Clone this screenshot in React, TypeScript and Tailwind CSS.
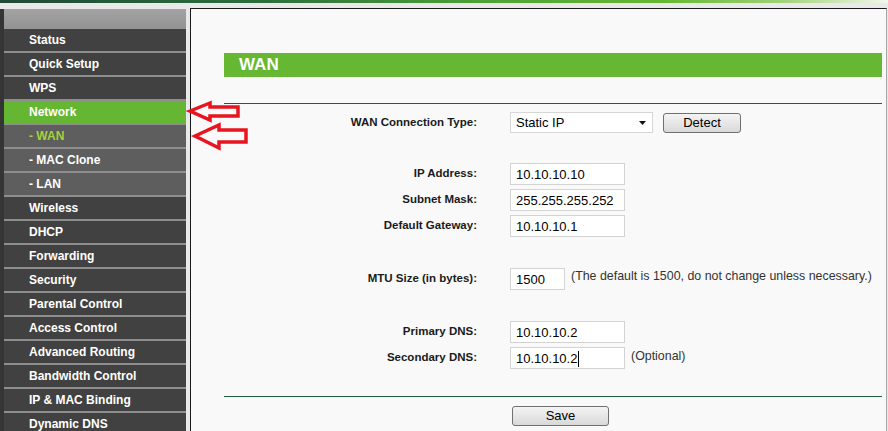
const menu = [
  { label: 'Status' },
  { label: 'Quick Setup' },
  { label: 'WPS' },
  { label: 'Network', active: true },
  { label: '- WAN', sub: true, current: true },
  { label: '- MAC Clone', sub: true },
  { label: '- LAN', sub: true },
  { label: 'Wireless' },
  { label: 'DHCP' },
  { label: 'Forwarding' },
  { label: 'Security' },
  { label: 'Parental Control' },
  { label: 'Access Control' },
  { label: 'Advanced Routing' },
  { label: 'Bandwidth Control' },
  { label: 'IP & MAC Binding' },
  { label: 'Dynamic DNS' },
];

function Sidebar() {
  return (
    <aside className="mt-[6px] w-[182px] shrink-0 bg-[#8f8f8f]">
      <div className="h-[20px] bg-gradient-to-b from-[#a3a3a3] to-[#939393]" />
      {menu.map((m) => (
        <div
          key={m.label}
          className={
            'flex h-[24px] items-center border-b-2 border-[#8e8e8e] pl-[25px] text-[12px] font-bold ' +
            (m.active ? 'bg-[#65b633] ' : m.sub ? 'bg-[#5e5e5e] ' : 'bg-[#414141] ') +
            (m.current ? 'text-[#a6d23c]' : 'text-white')
          }
        >
          {m.label}
        </div>
      ))}
    </aside>
  );
}

function Label({ children }: { children: React.ReactNode }) {
  return <div className="w-[253px] shrink-0 text-right text-[11.5px] font-bold text-[#1b1b1b]">{children}</div>;
}

function Field({ value, width, caret }: { value: string; width: string; caret?: boolean }) {
  return (
    <div className={'ml-[33px] flex h-[22px] items-center border border-[#d3d3d3] bg-white pl-[5px] pt-[2px] text-[13px] text-black ' + width}>
      {value}
      {caret && <span className="ml-px h-[16px] w-px bg-black" />}
    </div>
  );
}

function Btn({ children, className }: { children: React.ReactNode; className: string }) {
  return (
    <div
      className={
        'flex items-center justify-center rounded-[3px] border border-[#707070] bg-gradient-to-b from-[#f4f4f4] to-[#d9d9d9] text-[13px] text-black ' +
        className
      }
    >
      {children}
    </div>
  );
}

function Arrows() {
  return (
    <svg className="absolute left-0 top-0" width="260" height="160" viewBox="0 0 260 160">
      <polygon
        points="190,111 210,103 210,107 238,107 238,116 210,116 210,120"
        fill="#fafafa"
        stroke="#e8141e"
        strokeWidth="3.5"
        strokeLinejoin="miter"
      />
      <polygon
        points="195,136 219,125 219,130 246,130 246,142 219,142 219,148"
        fill="#fafafa"
        stroke="#e8141e"
        strokeWidth="3.5"
        strokeLinejoin="miter"
      />
    </svg>
  );
}

export default function App() {
  return (
    <div className="relative h-[431px] w-[888px] overflow-hidden bg-[#e9e9e9] font-['Liberation_Sans',Arial,sans-serif]">
      <div className="h-[3px] bg-[linear-gradient(to_right,#1f4a35_0%,#2b6f3d_30%,#4fa236_55%,#66b832_75%,#9fd177_88%,#f2f8ec_100%)]" />
      <div className="flex">
        <div className="mt-[6px] w-[4px] shrink-0 bg-[#353535]" />
        <Sidebar />
        <div className="w-[4px] shrink-0" />
        <main className="mr-px mt-[5px] h-[440px] flex-1 border-l border-r border-t border-l-[#1a1a1a] border-r-[#a6a6a6] border-t-[#1a1a1a] bg-[#f9f9f9] pl-[33px]">
          <div className="w-[658px]">
            <div className="mt-[44px] flex h-[24px] items-center bg-[#66b832] pl-[15px] text-[17px] font-bold text-white">
              WAN
            </div>
            <div className="mt-[26px] h-px bg-[#245c3b]" />

            <div className="mt-[8px] flex items-center">
              <Label>WAN Connection Type:</Label>
              <div className="ml-[33px] flex h-[21px] w-[143px] items-center justify-between border border-[#d6d6d6] bg-white pl-[5px] pr-[6px] text-[13px] text-black">
                Static IP
                <svg width="7" height="4" viewBox="0 0 7 4">
                  <polygon points="0,0 7,0 3.5,4" fill="#111" />
                </svg>
              </div>
              <Btn className="ml-[10px] h-[20px] w-[78px]">Detect</Btn>
            </div>

            <div className="mt-[30px] flex flex-col gap-[4px]">
              <div className="flex items-center">
                <Label>IP Address:</Label>
                <Field value="10.10.10.10" width="w-[115px]" />
              </div>
              <div className="flex items-center">
                <Label>Subnet Mask:</Label>
                <Field value="255.255.255.252" width="w-[115px]" />
              </div>
              <div className="flex items-center">
                <Label>Default Gateway:</Label>
                <Field value="10.10.10.1" width="w-[115px]" />
              </div>
            </div>

            <div className="mt-[30px] flex items-center">
              <Label>MTU Size (in bytes):</Label>
              <Field value="1500" width="w-[55px]" />
              <span className="mb-[5px] ml-[6px] text-[12.4px] text-[#333]">
                (The default is 1500, do not change unless necessary.)
              </span>
            </div>

            <div className="mt-[30px] flex flex-col gap-[4px]">
              <div className="flex items-center">
                <Label>Primary DNS:</Label>
                <Field value="10.10.10.2" width="w-[115px]" />
              </div>
              <div className="flex items-center">
                <Label>Secondary DNS:</Label>
                <Field value="10.10.10.2" width="w-[115px]" caret />
                <span className="mb-[3px] ml-[6px] text-[12.4px] text-[#333]">(Optional)</span>
              </div>
            </div>

            <div className="mt-[27px] h-px bg-[#245c3b]" />
            <Btn className="ml-[288px] mt-[9px] h-[20px] w-[97px]">Save</Btn>
          </div>
        </main>
      </div>
      <Arrows />
    </div>
  );
}
